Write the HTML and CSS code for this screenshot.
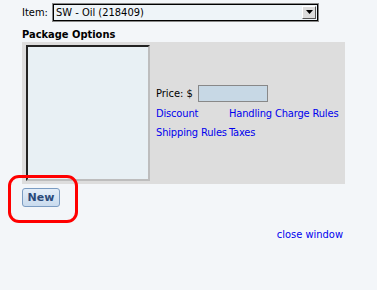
FILE: index.html
```html
<!DOCTYPE html>
<html>
<head>
<meta charset="utf-8">
<link rel="stylesheet" href="styles.css">
</head>
<body>
<div class="page">
  <div class="item-row">
    <span class="item-label">Item:</span>
    <div class="select">
      <span class="select-text">SW - Oil (218409)</span>
      <span class="select-btn"><svg width="7" height="4" viewBox="0 0 7 4"><path d="M0 0H7L3.5 4Z" fill="#000"/></svg></span>
    </div>
  </div>
  <div class="section-title">Package Options</div>
  <div class="panel">
    <div class="listbox"></div>
    <div class="options">
      <div class="price-row">
        <span>Price: $</span>
        <span class="price-input"></span>
      </div>
      <div class="links">
        <a href="#">Discount</a>
        <a href="#">Handling Charge Rules</a>
        <a href="#">Shipping Rules</a>
        <a href="#">Taxes</a>
      </div>
    </div>
  </div>
  <div class="actions">
    <button class="btn-new">New</button>
    <span class="highlight"></span>
  </div>
  <div class="footer">
    <a href="#">close window</a>
  </div>
</div>
</body>
</html>
```
FILE: styles.css
```css
html, body {
  margin: 0;
  padding: 0;
}
body {
  background: #f3f6f9;
  font-family: "DejaVu Sans Condensed", "Liberation Sans", sans-serif;
  font-size: 11px;
  color: #000;
  white-space: nowrap;
}
.page {
  padding: 3px 0 0 22px;
  width: 323px;
}
.item-row {
  display: flex;
  align-items: center;
  height: 18px;
}
.item-label {
  width: 31px;
}
.select {
  box-sizing: border-box;
  width: 265px;
  height: 17px;
  border: 1px solid #000;
  outline: 1px solid #888;
  background: #eef4f8;
  display: flex;
  align-items: center;
  justify-content: space-between;
}
.select-text {
  padding-left: 2px;
}
.select-btn {
  box-sizing: border-box;
  width: 14px;
  height: 13px;
  margin-right: 1px;
  background: #dcdcdc;
  border: 1px solid;
  border-color: #fff #555 #555 #fff;
  display: flex;
  align-items: center;
  justify-content: center;
}
.section-title {
  font-weight: bold;
  margin-top: 7px;
  height: 14px;
  line-height: 14px;
}
.panel {
  box-sizing: border-box;
  height: 142px;
  background: #dddddd;
  padding: 3px 4px;
  display: flex;
  align-items: center;
}
.listbox {
  box-sizing: border-box;
  flex: 0 0 124px;
  width: 124px;
  height: 136px;
  align-self: flex-start;
  background: #e8f0f4;
  border: 2px solid;
  border-color: #222 #bdbdbd #bdbdbd #222;
}
.options {
  margin-left: 6px;
  display: flex;
  flex-direction: column;
  flex-shrink: 0;
}
.price-row {
  display: flex;
  align-items: center;
  height: 19px;
}
.price-input {
  box-sizing: border-box;
  width: 70px;
  height: 17px;
  margin-left: 5px;
  background: #c7d8e5;
  border: 1px solid #888;
}
.links {
  display: grid;
  grid-template-columns: 71px auto;
  column-gap: 2px;
  grid-auto-rows: 19px;
  align-items: center;
  margin-top: 1px;
  letter-spacing: -0.15px;
}
a {
  color: #0000ee;
  text-decoration: none;
}
.actions {
  position: relative;
  height: 40px;
  padding-top: 4px;
}
.btn-new {
  box-sizing: border-box;
  width: 38px;
  height: 19px;
  padding: 0;
  border: 1px solid #7b9cc2;
  border-radius: 3px;
  background: linear-gradient(#e4eef8, #c9dbee);
  color: #2b4a7a;
  font-family: "DejaVu Sans", sans-serif;
  font-weight: bold;
  font-size: 11px;
}
.highlight {
  position: absolute;
  left: -14px;
  top: -9px;
  width: 70px;
  height: 48px;
  box-sizing: border-box;
  border: 3px solid #f00;
  border-radius: 11px;
}
.footer {
  text-align: right;
  padding-right: 2px;
}
```
